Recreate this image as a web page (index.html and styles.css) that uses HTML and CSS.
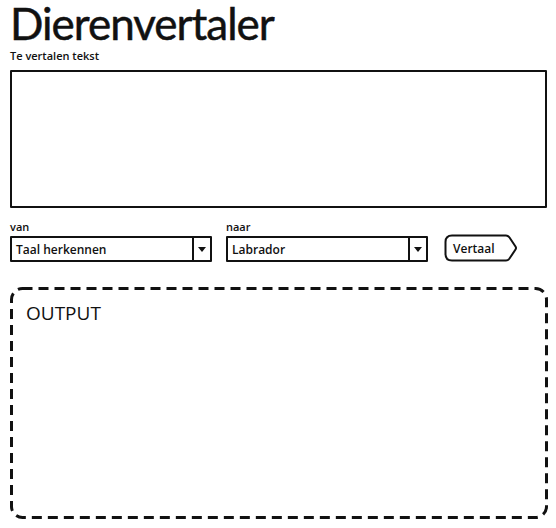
FILE: index.html
```html
<!DOCTYPE html>
<html lang="nl">
<head>
  <meta charset="UTF-8" />
  <title>Dierenvertaler</title>
  <link rel="stylesheet" href="styles.css">
</head>
<body>

  <h1 class="title">Dierenvertaler</h1>

  <label class="field-label" for="bron">Te vertalen tekst</label>
  <div class="textbox" id="bron"></div>

  <div class="controls">
    <div class="field">
      <span class="small-label">van</span>
      <div class="select">
        <span class="select-value">Taal herkennen</span>
        <span class="select-arrow"></span>
      </div>
    </div>
    <div class="field">
      <span class="small-label">naar</span>
      <div class="select">
        <span class="select-value">Labrador</span>
        <span class="select-arrow"></span>
      </div>
    </div>
    <div class="btn-vertaal">
      <svg class="btn-shape" viewBox="0 0 74 28" aria-hidden="true">
        <path d="M8 1.5 H62 Q64 1.5 65.5 3.5 L71.5 12.5 Q72.5 14 71.5 15.5 L65.5 24.5 Q64 26.5 62 26.5 H8 Q1.5 26.5 1.5 20 V8 Q1.5 1.5 8 1.5 Z" fill="#fff" stroke="#111" stroke-width="2" stroke-linejoin="round"/>
      </svg>
      <span class="btn-text">Vertaal</span>
    </div>
  </div>

  <div class="output">
    <svg class="output-border" viewBox="0 0 538 232" aria-hidden="true">
      <rect x="1.5" y="1.5" width="535" height="229" rx="11" ry="11" fill="none" stroke="#111" stroke-width="3" stroke-dasharray="10 6"/>
    </svg>
    <span class="output-text">OUTPUT</span>
  </div>

</body>
</html>
```

FILE: styles.css
```css
/* Basis */
body {
  margin: 0;
  padding: 0 10px;
  background: #fff;
  color: #111;
  font-family: 'Open Sans', sans-serif;
}

.title {
  font-family: 'Lato', sans-serif;
  font-size: 44px;
  font-weight: 400;
  line-height: 46px;
  margin: 0;
  letter-spacing: -1px;
  -webkit-text-stroke: 0.5px #111;
}

.field-label {
  display: block;
  font-size: 11px;
  font-weight: 600;
  line-height: 16px;
  margin-top: 2px;
  margin-bottom: 6px;
}

/* Tekstvak */
.textbox {
  box-sizing: border-box;
  width: 537px;
  height: 138px;
  border: 2px solid #111;
  border-radius: 1px;
}

/* Rij met keuzelijsten en knop */
.controls {
  display: flex;
  align-items: flex-end;
  gap: 14px;
  margin-top: 11px;
}

.field {
  display: flex;
  flex-direction: column;
  gap: 2px;
}

.small-label {
  font-size: 11px;
  font-weight: 600;
  line-height: 15px;
}

.select {
  box-sizing: border-box;
  width: 202px;
  height: 26px;
  border: 2px solid #111;
  border-radius: 1px;
  display: flex;
  align-items: center;
}

.select-value {
  flex: 1;
  padding-left: 4px;
  font-size: 12px;
  font-weight: 600;
}

.select-arrow {
  width: 16px;
  height: 100%;
  border-left: 2px solid #111;
  display: flex;
  align-items: center;
  justify-content: center;
}
.select-arrow::after {
  content: "";
  border-left: 4px solid transparent;
  border-right: 4px solid transparent;
  border-top: 5px solid #111;
}

/* Knop met pijlvorm */
.btn-vertaal {
  position: relative;
  width: 74px;
  height: 28px;
  margin-left: 2px;
  display: flex;
  align-items: center;
}
.btn-shape {
  position: absolute;
  top: 0; left: 0;
  width: 100%;
  height: 100%;
}
.btn-text {
  position: relative;
  padding-left: 9px;
  font-size: 12px;
  font-weight: 600;
}

/* Uitvoer */
.output {
  position: relative;
  box-sizing: border-box;
  width: 538px;
  height: 232px;
  margin-top: 25px;
  padding: 13px 16px;
}
.output-border {
  position: absolute;
  top: 0; left: 0;
  width: 100%;
  height: 100%;
}
.output-text {
  position: relative;
  font-size: 19px;
  font-weight: 400;
}
```
